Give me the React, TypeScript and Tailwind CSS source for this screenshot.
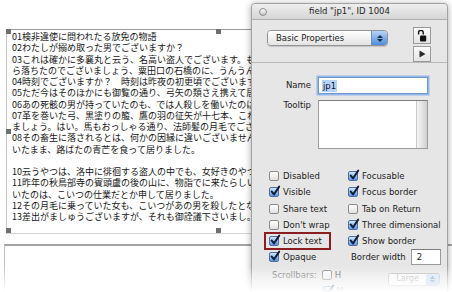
const jpLines = [
  '01検非違使に問われたる放免の物語',
  '02わたしが搦め取った男でございますか？',
  '03これは確かに多襄丸と云う、名高い盗人でございます。も',
  'ら落ちたのでございましょう、粟田口の石橋のに、うんうん',
  '04時刻でございますか？　時刻は昨夜の初更頃でございます',
  '05ただ今はそのほかにも御覧の通り、弓矢の類さえ携えて居',
  '06あの死骸の男が持っていたのも、では人殺しを働いたのは',
  '07革を巻いた弓、黒塗りの箙、鷹の羽の征矢が十七本、これ',
  'ましょう。はい。馬もおっしゃる通り、法師髪の月毛でござい',
  '08その畜生に落されるとは、何かの因縁に違いございません',
  'いたまま、路ばたの青芒を食って居りました。',
  '',
  '10云うやつは、洛中に徘徊する盗人の中でも、女好きのやつ',
  '11昨年の秋鳥部寺の賓頭盧の後の山に、物詣でに来たらしい',
  'いたのは、こいつの仕業だとか申して居りました。',
  '12その月毛に乗っていた女も、こいつがあの男を殺したとな',
  '13差出がましゅうございますが、それも御詮議下さいまし。',
];

function Check({ on }: { on: boolean }) {
  if (on) {
    return (
      <span className="w-[10px] h-[10px] rounded-[2px] border border-[#4d6e9e] bg-linear-to-b from-[#d3e6fb] to-[#5b97e0] shrink-0 flex">
        <svg width="10" height="10" viewBox="0 0 10 10" className="overflow-visible -mt-[2px]">
          <path d="M1.6 5.4 L4 8.4 L9.2 0.6" stroke="#0f1e38" strokeWidth="1.9" fill="none" strokeLinecap="round" strokeLinejoin="round" />
        </svg>
      </span>
    );
  }
  return <span className="w-[10px] h-[10px] rounded-[2px] border border-[#8a8a8a] bg-linear-to-b from-white to-[#e2e2e2] shrink-0" />;
}

function Opt({ on, label }: { on: boolean; label: string }) {
  return (
    <div className="flex items-center gap-[4px]">
      <Check on={on} />
      <span className="leading-[10px]">{label}</span>
    </div>
  );
}

function Handle({ className }: { className: string }) {
  return <span className={`absolute w-[5px] h-[5px] bg-[#6f6f6f] ${className}`} />;
}

export default function App() {
  return (
    <div className="relative w-[452px] h-[292px] overflow-hidden bg-white">
      {/* stack card behind the inspector */}
      <div className="flex flex-col pt-[29px]">
        <div className="pl-[6px]">
          <div className="relative w-[424px] h-[205px] border-t border-l border-b border-t-[#9a9a9a] border-l-[#c4c4c4] border-b-[#d4d4d4] pl-[5px] pt-[1px] font-['Noto_Sans_CJK_JP',sans-serif] text-[9px] leading-[11.25px] text-[#161616]">
            {jpLines.map((l, i) => (
              <div key={i} className="whitespace-nowrap h-[11.25px]">
                {l}
              </div>
            ))}
            <Handle className="-top-[1px] -left-[1px]" />
            <Handle className="-top-[1px] left-[209px]" />
            <Handle className="top-[99px] -left-[1px]" />
            <Handle className="bottom-[0px] -left-[1px]" />
            <Handle className="bottom-[0px] left-[209px]" />
          </div>
        </div>
        <div className="pl-[4px] mt-[10px]">
          <div className="h-[60px] border-t-2 border-l border-t-[#a3a3a3] border-l-[#c0c0c0]" />
        </div>
      </div>

      {/* property inspector window */}
      <div className="absolute left-[251px] top-[3px] w-[197px] h-[300px] bg-[#e6e6e6] border border-[#a2a2a2] rounded-t-[4px] shadow-[0_1px_7px_rgba(0,0,0,0.35)] font-['DejaVu_Sans',sans-serif] text-[8.5px] text-[#1c1c1c]">
        {/* title bar */}
        <div className="relative h-[16px] flex items-center justify-center rounded-t-[4px] bg-linear-to-b from-[#efefef] to-[#d5d5d5] border-b border-[#b0b0b0]">
          <span className="absolute left-[7px] top-[4px] w-[8px] h-[8px] rounded-full border border-[#8d8d8d] bg-linear-to-b from-[#fafafa] to-[#c9c9c9]" />
          <span className="text-[#262626]">field "jp1", ID 1004</span>
        </div>

        {/* header */}
        <div className="h-[43px] flex pl-[15px] pt-[7px] border-b border-[#b8b8b8]">
          <div className="mt-[3px] w-[121px] h-[16px] flex rounded-[4px] border border-[#939393] shadow-[0_1px_1px_rgba(0,0,0,0.15)] overflow-hidden">
            <div className="flex-1 flex items-center pl-[8px] bg-linear-to-b from-white to-[#e3e3e3] text-[8.5px]">Basic Properties</div>
            <div className="w-[16px] flex flex-col items-center justify-center gap-[1px] bg-linear-to-b from-[#b5d3f7] to-[#4d8ddd] border-l border-[#6d8fbf]">
              <svg width="6" height="3" viewBox="0 0 6 3"><path d="M0 3 L3 0 L6 3 Z" fill="#1b2c48" /></svg>
              <svg width="6" height="3" viewBox="0 0 6 3"><path d="M0 0 L3 3 L6 0 Z" fill="#1b2c48" /></svg>
            </div>
          </div>
          <div className="ml-[25px] flex flex-col gap-[2px]">
            <div className="w-[18px] h-[17px] border border-[#9a9a9a] bg-linear-to-b from-[#fbfbfb] to-[#e4e4e4] flex items-center justify-center">
              <svg width="10" height="12" viewBox="0 0 10 12">
                <path d="M3.2 5 V3.2 a2.3 2.3 0 0 1 4.6 0 V5" stroke="#111" strokeWidth="1.4" fill="none" transform="translate(-1.6 -0.6)" />
                <rect x="3" y="5.5" width="6.2" height="6" rx="1" fill="#111" />
              </svg>
            </div>
            <div className="w-[18px] h-[16px] border border-[#9a9a9a] bg-linear-to-b from-[#fbfbfb] to-[#e4e4e4] flex items-center justify-center">
              <svg width="7" height="8" viewBox="0 0 7 8"><path d="M0.5 0.5 L6.5 4 L0.5 7.5 Z" fill="#2a2a2a" /></svg>
            </div>
          </div>
        </div>

        {/* name / tooltip */}
        <div className="pt-[14px] grid grid-cols-[59px_110px] gap-x-[7px] gap-y-[6px] items-start">
          <span className="text-right leading-[16px]">Name</span>
          <div className="h-[17px] bg-white border border-[#6f97cf] shadow-[0_0_0_1.5px_#93b8ea] flex items-center pl-[3px]">
            <span className="bg-[#b6d4fb] px-[1px] leading-[12px] text-[#111]">jp1</span>
          </div>
          <span className="text-right leading-[10px]">Tooltip</span>
          <div className="h-[49px] bg-white border border-[#9c9c9c] border-t-[#7e7e7e] flex justify-end">
            <div className="w-[11px] h-full bg-linear-to-r from-[#f4f4f4] via-[#e4e4e4] to-[#cfcfcf] border-l border-[#c9c9c9]" />
          </div>
        </div>

        {/* options */}
        <div className="pt-[19px] pl-[17px] flex flex-col">
          <div className="h-[16.25px] flex items-center">
            <div className="w-[79px]"><Opt on={false} label="Disabled" /></div>
            <Opt on label="Focusable" />
          </div>
          <div className="h-[16.25px] flex items-center">
            <div className="w-[79px]"><Opt on label="Visible" /></div>
            <Opt on label="Focus border" />
          </div>
          <div className="h-[16.25px] flex items-center">
            <div className="w-[79px]"><Opt on={false} label="Share text" /></div>
            <Opt on={false} label="Tab on Return" />
          </div>
          <div className="h-[16.25px] flex items-center">
            <div className="w-[79px]"><Opt on={false} label="Don't wrap" /></div>
            <Opt on label="Three dimensional" />
          </div>
          <div className="h-[16.25px] flex items-center">
            <div className="relative w-[79px]">
              <Opt on label="Lock text" />
              <span className="absolute -left-[5px] -top-[4px] w-[67px] h-[18px] border-2 border-[#8b1f1f]" />
            </div>
            <Opt on label="Show border" />
          </div>
          <div className="h-[16.25px] flex items-center">
            <div className="w-[82px]"><Opt on label="Opaque" /></div>
            <span className="leading-[10px]">Border width</span>
            <div className="ml-[5px] w-[30px] h-[16px] bg-white border border-[#9a9a9a] border-t-[#7d7d7d] flex items-center pl-[5px]">2</div>
          </div>
          <div className="h-[17px] flex items-start pt-[4px]">
            <span className="ml-[3px] text-[#6c6c6c] leading-[10px]">Scrollbars:</span>
            <div className="ml-[5px] flex items-center gap-[3px]">
              <Check on={false} />
              <span className="text-[#5c5c5c] leading-[10px]">H</span>
            </div>
            <div className="ml-[47px] mt-[3px] w-[52px] h-[13px] flex rounded-[3px] border border-[#b9b9b9] overflow-hidden">
              <div className="flex-1 flex items-center justify-center bg-[#f7f7f7] text-[#a9a9a9] text-[8px]">Large</div>
              <div className="w-[13px] flex flex-col items-center justify-center gap-[1px] bg-linear-to-b from-[#d6e6fa] to-[#a8c8f0]">
                <svg width="5" height="3" viewBox="0 0 5 3"><path d="M0 3 L2.5 0 L5 3 Z" fill="#7d90ad" /></svg>
                <svg width="5" height="3" viewBox="0 0 5 3"><path d="M0 0 L2.5 3 L5 0 Z" fill="#7d90ad" /></svg>
              </div>
            </div>
          </div>
          <div className="h-[16px] flex items-center pl-[54px]">
            <Opt on label="V" />
          </div>
        </div>
      </div>

      {/* bottom fade */}
      <div className="absolute left-0 right-0 bottom-0 h-[26px] bg-linear-to-b from-white/0 via-white/55 to-white" />
    </div>
  );
}
